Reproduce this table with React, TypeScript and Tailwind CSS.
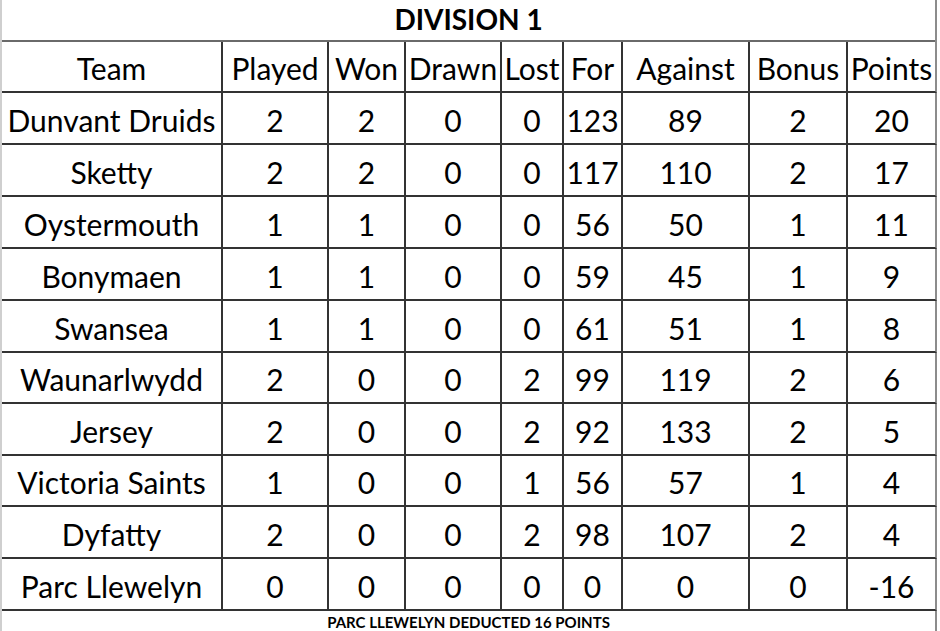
const COLS = ['Team', 'Played', 'Won', 'Drawn', 'Lost', 'For', 'Against', 'Bonus', 'Points'];

const ROWS: (string | number)[][] = [
  ['Dunvant Druids', 2, 2, 0, 0, 123, 89, 2, 20],
  ['Sketty', 2, 2, 0, 0, 117, 110, 2, 17],
  ['Oystermouth', 1, 1, 0, 0, 56, 50, 1, 11],
  ['Bonymaen', 1, 1, 0, 0, 59, 45, 1, 9],
  ['Swansea', 1, 1, 0, 0, 61, 51, 1, 8],
  ['Waunarlwydd', 2, 0, 0, 2, 99, 119, 2, 6],
  ['Jersey', 2, 0, 0, 2, 92, 133, 2, 5],
  ['Victoria Saints', 1, 0, 0, 1, 56, 57, 1, 4],
  ['Dyfatty', 2, 0, 0, 2, 98, 107, 2, 4],
  ['Parc Llewelyn', 0, 0, 0, 0, 0, 0, 0, -16],
];

// row heights incl. bottom border, matched to the sheet's gridlines
const ROW_H = ['h-[52px]', 'h-[52px]', 'h-[52px]', 'h-[52px]', 'h-[52px]', 'h-[51px]', 'h-[52px]', 'h-[51px]', 'h-[52px]', 'h-[52px]'];

const GRID = 'grid grid-cols-[221px_106px_77px_96px_62px_59px_127px_98px_89px]';

function Cell({ children, last }: { children: React.ReactNode; last: boolean }) {
  return (
    <div
      className={`flex items-center justify-center border-b-2 border-r-2 pt-[4px] ${
        last ? 'border-r-[#8c8c8c] border-b-[#333]' : 'border-[#333]'
      }`}
    >
      {children}
    </div>
  );
}

export default function App() {
  return (
    <div className="h-[631px] w-[940px] bg-white font-['Lato',sans-serif] text-black">
      <div className="w-[937px] border-l-2 border-r-2 border-l-[#cfcfcf] border-r-[#8c8c8c]">
        <div className="flex h-[42px] items-center justify-center border-b-2 border-[#6a6a6a] pb-[2px] text-[28px] font-bold">
          DIVISION 1
        </div>
        <div className={`${GRID} h-[51px] text-[30px]`}>
          {COLS.map((c, i) => (
            <Cell key={c} last={i === COLS.length - 1}>
              {c}
            </Cell>
          ))}
        </div>
        {ROWS.map((row, r) => (
          <div key={row[0]} className={`${GRID} ${ROW_H[r]} text-[30px]`}>
            {row.map((v, i) => (
              <Cell key={i} last={i === row.length - 1}>
                {v}
              </Cell>
            ))}
          </div>
        ))}
        <div className="flex h-[20px] items-center justify-center pt-[3px] text-[15px] font-bold">
          PARC LLEWELYN DEDUCTED 16 POINTS
        </div>
      </div>
    </div>
  );
}
